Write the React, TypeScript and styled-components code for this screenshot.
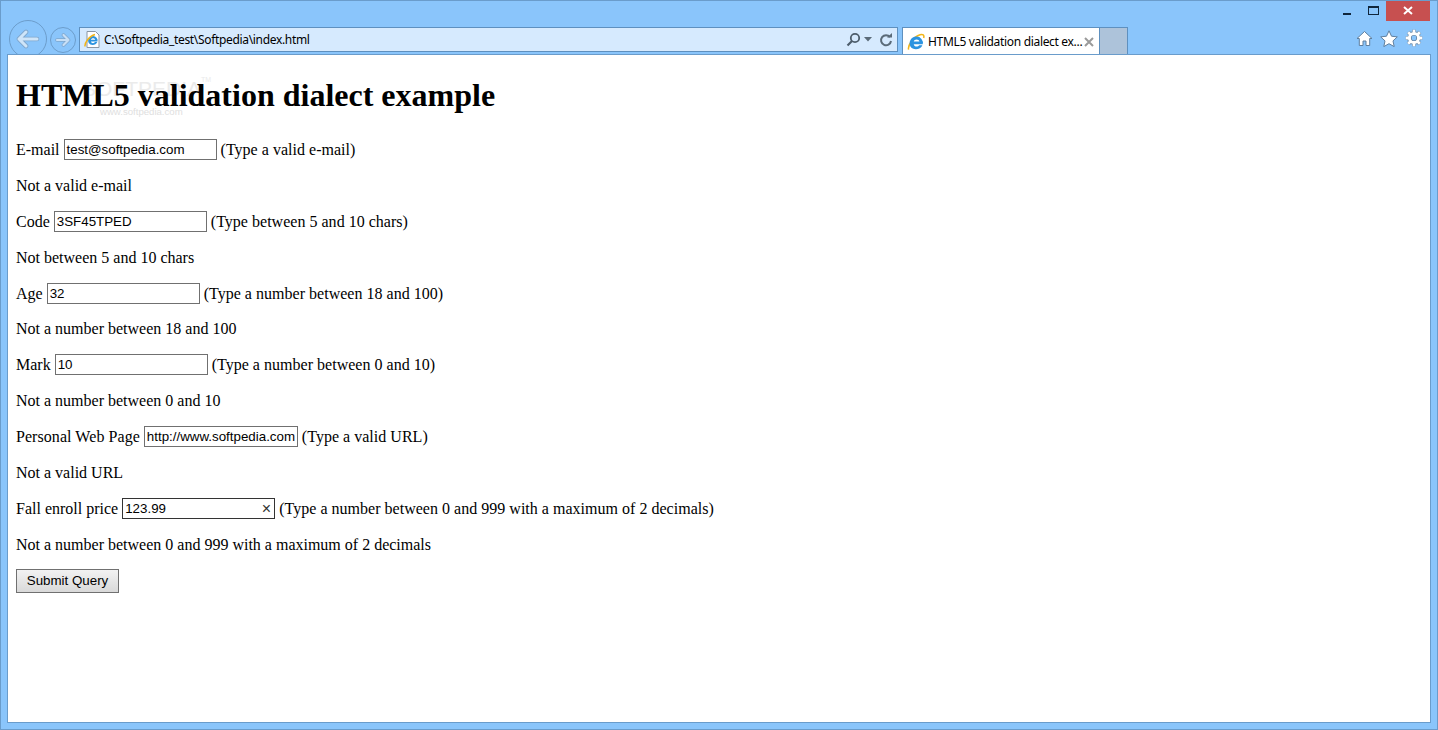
import styled, { createGlobalStyle } from 'styled-components'

const GlobalStyle = createGlobalStyle`
  html, body {
    margin: 0;
    height: 100%;
    overflow: hidden;
  }
`

const Window = styled.div`
  box-sizing: border-box;
  width: 1438px;
  height: 730px;
  display: flex;
  flex-direction: column;
  background: #8ac5fb;
  border: 1px solid #6a9ccb;
  font-family: 'Liberation Sans', Arial, sans-serif;
`

const TitleBar = styled.div`
  height: 20px;
  flex: none;
  display: flex;
  justify-content: flex-end;
  padding-right: 7px;
`

const WinButton = styled.div<{ $w: number; $close?: boolean }>`
  width: ${(p) => p.$w}px;
  height: 20px;
  display: flex;
  align-items: center;
  justify-content: center;
  background: ${(p) => (p.$close ? '#c75050' : 'transparent')};
`

const Toolbar = styled.div`
  height: 33px;
  flex: none;
  display: flex;
  align-items: flex-start;
  padding: 0 0 0 8px;
`

const NavButtons = styled.div`
  width: 70px;
  flex: none;
  display: flex;
  align-items: flex-start;
  gap: 3px;
`

const BackButton = styled.div`
  box-sizing: border-box;
  width: 38px;
  height: 38px;
  margin-top: -1px;
  border-radius: 50%;
  border: 1px solid #6c9dcb;
  display: flex;
  align-items: center;
  justify-content: center;
  flex: none;
`

const ForwardButton = styled(BackButton)`
  width: 26px;
  height: 26px;
  margin-top: 6px;
`

const AddressBar = styled.div`
  box-sizing: border-box;
  width: 819px;
  height: 25px;
  margin-top: 6px;
  flex: none;
  display: flex;
  align-items: center;
  background: #d6eafe;
  border: 1px solid #5e90bf;
  padding: 0 4px;
`

const AddressText = styled.span`
  flex: 1;
  margin-left: 4px;
  font-family: 'Noto Sans', sans-serif;
  font-size: 12px;
  letter-spacing: -0.33px;
  color: #000;
`

const AddressTools = styled.div`
  display: flex;
  align-items: center;
  gap: 3px;
`

const Tab = styled.div`
  box-sizing: border-box;
  width: 198px;
  height: 28px;
  margin: 6px 0 0 4px;
  flex: none;
  display: flex;
  align-items: center;
  background: #fff;
  border: 1px solid #5e90bf;
  border-bottom: none;
  padding: 0 5px 0 4px;
  font-family: 'Noto Sans', sans-serif;
  font-size: 12px;
  color: #000;
  white-space: nowrap;
`

const TabTitle = styled.span`
  flex: 1;
  margin-left: 3px;
  letter-spacing: -0.32px;
`

const NewTab = styled.div`
  box-sizing: border-box;
  width: 28px;
  height: 28px;
  margin-top: 6px;
  flex: none;
  background: #adc3da;
  border: 1px solid #5e90bf;
  border-left: none;
  border-bottom: none;
`

const RightTools = styled.div`
  margin-left: auto;
  padding: 8px 14px 0 0;
  display: flex;
  align-items: center;
  gap: 7px;
`

const Page = styled.main`
  position: relative;
  z-index: 1;
  flex: 1;
  min-height: 0;
  margin: 0 6px 6px 6px;
  box-sizing: border-box;
  background: #fff;
  border: 1px solid #6a9ccb;
  padding: 0 8px;
  font-family: 'Liberation Serif', 'Times New Roman', serif;
  font-size: 16px;
  color: #000;
`

const Heading = styled.h1`
  position: relative;
  margin: 22px 0 25px;
  font-size: 32px;
  line-height: 37px;
  font-weight: bold;
`

const Watermark = styled.div`
  position: absolute;
  left: 66px;
  top: 0;
  color: #ebebeb;
  font-family: 'Liberation Sans', Arial, sans-serif;
  font-size: 21px;
  font-weight: normal;
  line-height: 24px;
  z-index: -1;
`

const WatermarkMark = styled.sup`
  font-size: 7px;
  line-height: 0;
  vertical-align: 14px;
`

const WatermarkUrl = styled.div`
  margin: 4px 0 0 18px;
  color: #e0e0e0;
  font-size: 9.6px;
  line-height: 14px;
`

const Row = styled.p`
  margin: 0 0 15.9px;
  height: 20px;
  line-height: 22px;
  display: flex;
  align-items: flex-start;
  white-space: pre;
`

const Label = styled.span<{ $wide?: boolean }>`
  letter-spacing: ${(p) => (p.$wide ? '0.06px' : '0')};
`

const Hint = styled.span`
  letter-spacing: 0.02px;
`

const Field = styled.div<{ $dark?: boolean; $wide?: boolean }>`
  box-sizing: border-box;
  width: ${(p) => (p.$wide ? 154 : 153)}px;
  height: 21px;
  margin: 0 4px;
  padding: 0 2px;
  display: flex;
  align-items: center;
  justify-content: space-between;
  border: 1px solid ${(p) => (p.$dark ? '#333' : '#707070')};
  font-family: 'Liberation Sans', Arial, sans-serif;
  font-size: 13.33px;
  line-height: 19px;
  overflow: hidden;
`

const Clear = styled.span`
  font-size: 16px;
  margin-right: 1px;
  color: #333;
`

const SubmitButton = styled.button`
  display: block;
  box-sizing: border-box;
  width: 103px;
  height: 24px;
  margin-top: -1px;
  padding: 0;
  border: 1px solid #707070;
  background: linear-gradient(#f2f2f2, #d9d9d9);
  font-family: 'Liberation Sans', Arial, sans-serif;
  font-size: 13.33px;
  color: #000;
`

const IeLogo = ({ size }: { size: number }) => (
  <svg width={size} height={size} viewBox="0 0 20 20" style={{ flex: 'none' }}>
    <path
      d="M1.800 18.500C.5 14 7 4.500 14.500 2c3-1 5 .2 4 3.500"
      fill="none"
      stroke="#f2b518"
      strokeWidth="1.700"
    />
    <path
      d="M10.500 4a7 7 0 0 1 7 8.500H7.500c.3 3 4.500 3.400 6.100 1h3.500C15.200 19 6.500 19.500 3.800 15c-2.500-4.500.5-11 6.700-11zM7.500 9.500h6.300c-.2-3-6-3-6.300 0z"
      fill="#2b93e0"
      fillRule="evenodd"
    />
  </svg>
)

const DocIcon = () => (
  <svg width="16" height="17" viewBox="0 0 16 17" style={{ flex: 'none' }}>
    <path d="M3 .5h8.500L15 4v12.500H3z" fill="#fff" stroke="#8a97a5" />
    <path
      d="M9 5a4.500 4.500 0 0 1 4.500 5.500H7c.2 2 3 2.200 4 .6h2.300C12 14.500 6.500 15 4.800 12 3 8.800 5 5 9 5zM7 8.800h4.200c-.1-2-4-2-4.200 0z"
      fill="#2b93e0"
      fillRule="evenodd"
    />
    <path d="M1 15.500C.5 12 5 5 11 3.500" fill="none" stroke="#f2b518" strokeWidth="1.500" />
  </svg>
)

const gearTeeth = 'M9 .8v3M9 14.200v3M.8 9h3M14.200 9h3M3.200 3.200l2.200 2.200M12.600 12.600l2.200 2.200M14.800 3.200l-2.200 2.200M5.400 12.600l-2.200 2.200'

const fields = [
  { label: 'E-mail', value: 'test@softpedia.com', hint: '(Type a valid e-mail)', error: 'Not a valid e-mail' },
  { label: 'Code', value: '3SF45TPED', hint: '(Type between 5 and 10 chars)', error: 'Not between 5 and 10 chars' },
  { label: 'Age', value: '32', hint: '(Type a number between 18 and 100)', error: 'Not a number between 18 and 100' },
  { label: 'Mark', value: '10', hint: '(Type a number between 0 and 10)', error: 'Not a number between 0 and 10' },
  {
    label: 'Personal Web Page',
    value: 'http://www.softpedia.com',
    hint: '(Type a valid URL)',
    error: 'Not a valid URL',
    wide: true,
  },
  {
    label: 'Fall enroll price',
    value: '123.99',
    hint: '(Type a number between 0 and 999 with a maximum of 2 decimals)',
    error: 'Not a number between 0 and 999 with a maximum of 2 decimals',
    focused: true,
  },
]

export default function App() {
  return (
    <>
      <GlobalStyle />
      <Window>
        <TitleBar>
          <WinButton $w={27}>
            <svg width="10" height="10" viewBox="0 0 10 10">
              <rect x="1" y="7" width="8" height="2" fill="#10263c" />
            </svg>
          </WinButton>
          <WinButton $w={26}>
            <svg width="11" height="10" viewBox="0 0 11 10">
              <rect x="0.500" y="0.500" width="10" height="8" fill="none" stroke="#10263c" />
              <rect x="0" y="0" width="11" height="2" fill="#10263c" />
            </svg>
          </WinButton>
          <WinButton $w={44} $close>
            <svg width="10" height="10" viewBox="0 0 10 10">
              <path d="M1 1l8 7M9 1L1 8" stroke="#fff" strokeWidth="2" />
            </svg>
          </WinButton>
        </TitleBar>
        <Toolbar>
          <NavButtons>
            <BackButton>
              <svg width="24" height="20" viewBox="0 0 24 20">
                <path
                  d="M3 10l7-7M3 10l7 7M3 10h18"
                  fill="none"
                  stroke="#7fa6cc"
                  strokeWidth="4.600"
                  strokeLinecap="round"
                />
                <path
                  d="M3 10l7-7M3 10l7 7M3 10h18"
                  fill="none"
                  stroke="#cfe5f9"
                  strokeWidth="3"
                  strokeLinecap="round"
                />
              </svg>
            </BackButton>
            <ForwardButton>
              <svg width="16" height="14" viewBox="0 0 16 14">
                <path
                  d="M13.500 7L8.500 2M13.500 7l-5 5M13.500 7H2"
                  fill="none"
                  stroke="#7fa6cc"
                  strokeWidth="3.600"
                  strokeLinecap="round"
                />
                <path
                  d="M13.500 7L8.500 2M13.500 7l-5 5M13.500 7H2"
                  fill="none"
                  stroke="#c7dff6"
                  strokeWidth="2.200"
                  strokeLinecap="round"
                />
              </svg>
            </ForwardButton>
          </NavButtons>
          <AddressBar>
            <DocIcon />
            <AddressText>C:\Softpedia_test\Softpedia\index.html</AddressText>
            <AddressTools>
              <svg width="15" height="15" viewBox="0 0 15 15">
                <circle cx="9" cy="6" r="4.200" fill="none" stroke="#4d5d6b" strokeWidth="1.800" />
                <path d="M6 9l-4.500 4.500" stroke="#4d5d6b" strokeWidth="2.200" />
              </svg>
              <svg width="8" height="5" viewBox="0 0 8 5">
                <path d="M0 0h8L4 4.500z" fill="#5b6b79" />
              </svg>
              <svg width="14" height="14" viewBox="0 0 14 14" style={{ marginLeft: 4 }}>
                <path d="M11 4.200A5 5 0 1 0 12 8" fill="none" stroke="#5b6b79" strokeWidth="2" />
                <path d="M8 4.600h5V0z" fill="#5b6b79" />
              </svg>
            </AddressTools>
          </AddressBar>
          <Tab>
            <IeLogo size={18} />
            <TabTitle>HTML5 validation dialect ex...</TabTitle>
            <svg width="10" height="10" viewBox="0 0 10 10" style={{ flex: 'none' }}>
              <path d="M1 1l8 8M9 1l-8 8" stroke="#9a9a9a" strokeWidth="2" />
            </svg>
          </Tab>
          <NewTab />
          <RightTools>
            <svg width="17" height="17" viewBox="0 0 17 17">
              <path
                d="M8.500 1.500L1 8.500h2.300v7h3.700v-4.500h3v4.500h3.700v-7H16z"
                fill="#fff"
                stroke="#5f7f9e"
              />
            </svg>
            <svg width="18" height="17" viewBox="0 0 18 17">
              <path
                d="M9 .8l2.500 5.400 5.800.7-4.300 4 1.200 5.700L9 13.700l-5.200 2.900L5 10.900.7 6.900l5.800-.7z"
                fill="#fff"
                stroke="#5f7f9e"
              />
            </svg>
            <svg width="18" height="18" viewBox="0 0 18 18">
              <circle cx="9" cy="9" r="4.600" fill="none" stroke="#5f7f9e" strokeWidth="4.400" />
              <path d={gearTeeth} stroke="#5f7f9e" strokeWidth="4" />
              <circle cx="9" cy="9" r="4.600" fill="none" stroke="#fff" strokeWidth="3" />
              <path d={gearTeeth} stroke="#fff" strokeWidth="2.800" />
            </svg>
          </RightTools>
        </Toolbar>
        <Page>
          <Heading>
            <Watermark>
              SOFTPEDIA<WatermarkMark>TM</WatermarkMark>
              <WatermarkUrl>www.softpedia.com</WatermarkUrl>
            </Watermark>
            HTML5 validation dialect example
          </Heading>
          {fields.map((f) => (
            <div key={f.label}>
              <Row>
                <Label $wide={f.wide}>{f.label}</Label>
                <Field $dark={f.focused} $wide={f.wide}>
                  {f.value}
                  {f.focused && <Clear>×</Clear>}
                </Field>
                <Hint>{f.hint}</Hint>
              </Row>
              <Row>{f.error}</Row>
            </div>
          ))}
          <SubmitButton>Submit Query</SubmitButton>
        </Page>
      </Window>
    </>
  )
}
